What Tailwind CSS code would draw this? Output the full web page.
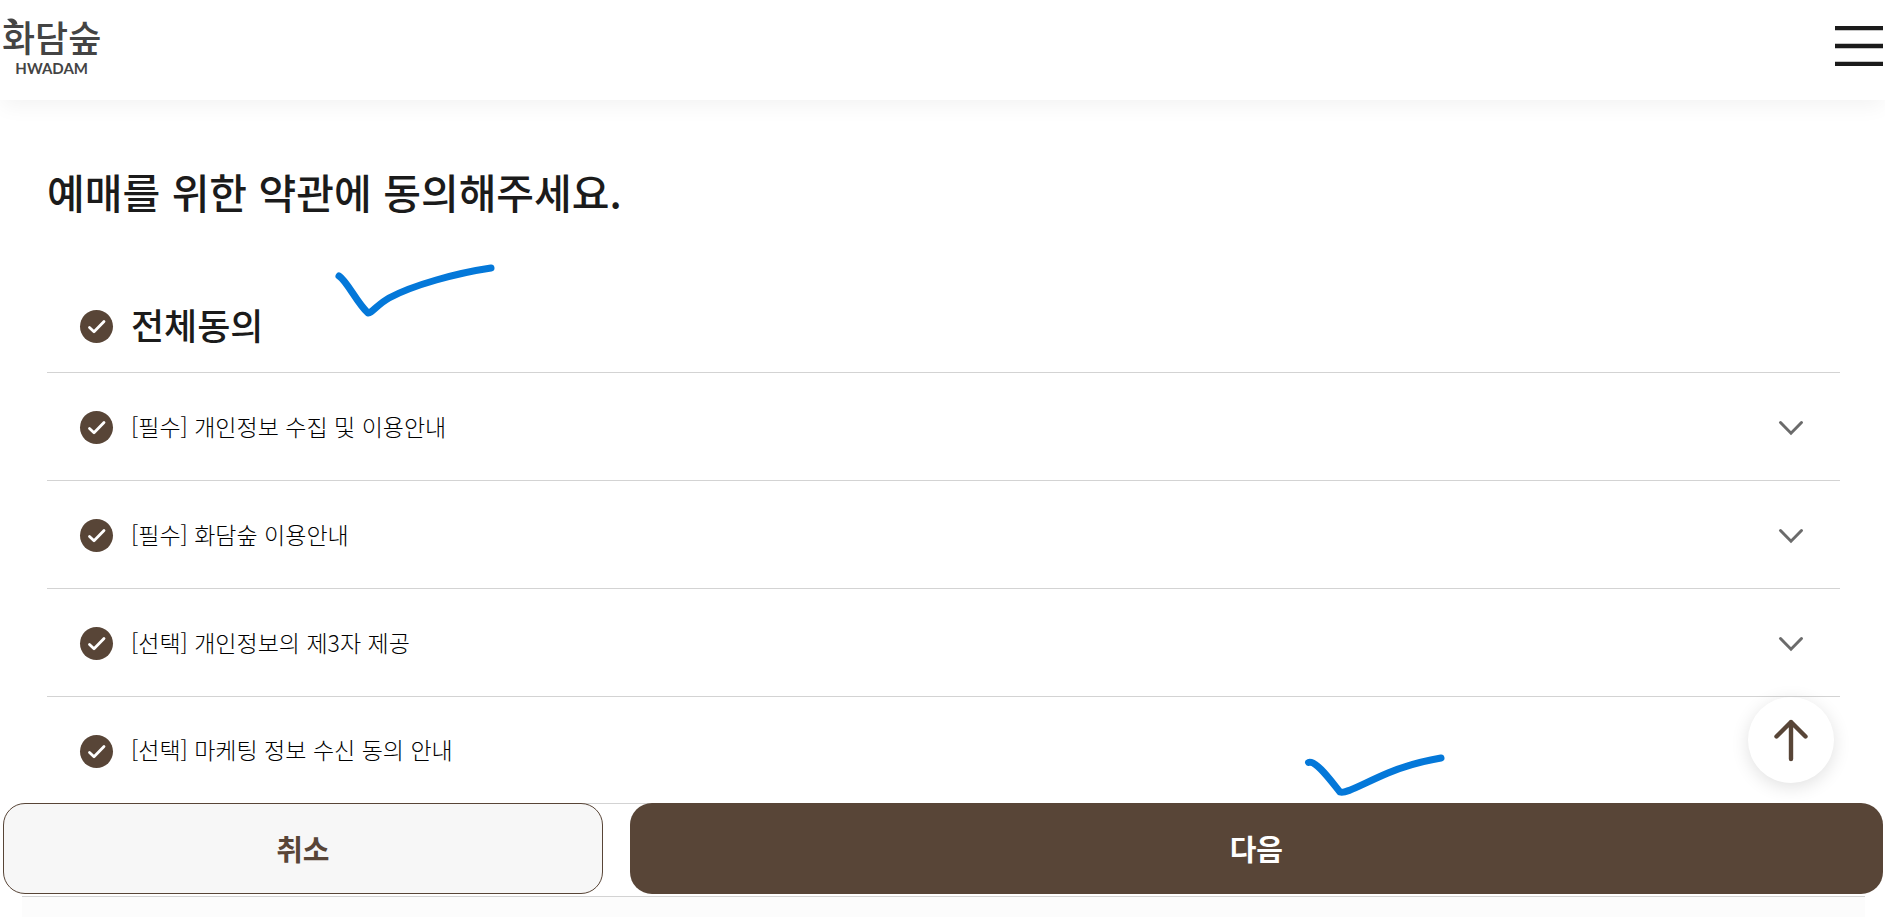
<!DOCTYPE html>
<html lang="ko">
<head>
    <meta charset="UTF-8">
    <meta name="viewport" content="width=device-width, initial-scale=1.0">
    <title>화담숲 예매</title>
    <script src="https://cdn.jsdelivr.net/npm/@tailwindcss/browser@4"></script>
</head>
<body class="relative flex min-h-screen flex-col bg-white font-['Noto_Sans_CJK_KR',sans-serif] text-[#1b1b1b]">
<header class="flex h-[100px] items-start justify-between px-[2px] shadow-[0_8px_20px_-2px_rgba(0,0,0,0.05)]">
    <a href="#" class="relative flex flex-col items-center pt-[10px] text-[#444]">
        <span class="text-[36px] leading-[52px] font-medium">화담숲</span>
        <span class="font-[Lato,sans-serif] text-[15px] leading-[12px] font-bold">HWADAM</span>
        <!-- leaf -->
        <svg class="absolute top-[18px] left-[4px] h-[7px] w-[12px]" viewBox="0 0 12 7" fill="#444"><path d="M1 1C6-.5 11 1 11.500 6.500C6 6.500 4 4 1 1z"/></svg>
    </a>
    <button type="button" aria-label="메뉴" class="mt-[26px] h-[40px] w-[48px]">
        <svg class="block h-[40px] w-[48px]" viewBox="0 0 48 40" fill="#1b1b1b">
            <path d="M0 0h48v4.3H0zM0 17.7h48v4.6H0zM0 35.7h48V40H0z"/>
        </svg>
    </button>
</header>

<main class="pr-[45px] pl-[47px]">
    <h1 class="pt-[61px] text-[41px] leading-[60px] font-medium">예매를 위한 약관에 동의해주세요.</h1>

    <form id="agreeForm" class="mt-[59px]">
        <div class="flex h-[93px] items-center border-b border-[#d3d3d3] pl-[33px]">
            <label class="flex items-center gap-[18px]">
                <span class="grid size-[33px]">
                    <input type="checkbox" id="agreeAll" checked class="col-start-1 row-start-1 appearance-none rounded-full bg-[#bbb] checked:bg-[#584537]">
                    <svg class="pointer-events-none col-start-1 row-start-1" viewBox="0 0 33 33" fill="none" stroke="#fff" stroke-width="2.8" stroke-linecap="round" stroke-linejoin="round"><path d="M9.5 17.5l4.5 4.2L24 11.5"/></svg>
                </span>
                <span class="pb-1 text-[36px] leading-[52px] font-medium">전체동의</span>
            </label>
        </div>

        <div class="flex h-[108px] items-center justify-between border-b border-[#d3d3d3] pt-[2px] pr-[36px] pl-[33px]">
            <label class="flex items-center gap-[18px]">
                <span class="grid size-[33px]">
                    <input type="checkbox" checked class="agree col-start-1 row-start-1 appearance-none rounded-full bg-[#bbb] checked:bg-[#584537]">
                    <svg class="pointer-events-none col-start-1 row-start-1" viewBox="0 0 33 33" fill="none" stroke="#fff" stroke-width="2.8" stroke-linecap="round" stroke-linejoin="round"><path d="M9.5 17.5l4.5 4.2L24 11.5"/></svg>
                </span>
                <span class="pb-1 text-[23px] leading-[36px] font-light text-black">[필수] 개인정보 수집 및 이용안내</span>
            </label>
            <button type="button" aria-label="내용 보기">
                <svg class="block h-[16px] w-[26px]" viewBox="0 0 26 16" fill="none" stroke="#6b6b6b" stroke-width="3" stroke-linecap="round"><path d="M2.5 2.5L13 13.2 23.500 2.5"/></svg>
            </button>
        </div>

        <div class="flex h-[108px] items-center justify-between border-b border-[#d3d3d3] pt-[2px] pr-[36px] pl-[33px]">
            <label class="flex items-center gap-[18px]">
                <span class="grid size-[33px]">
                    <input type="checkbox" checked class="agree col-start-1 row-start-1 appearance-none rounded-full bg-[#bbb] checked:bg-[#584537]">
                    <svg class="pointer-events-none col-start-1 row-start-1" viewBox="0 0 33 33" fill="none" stroke="#fff" stroke-width="2.8" stroke-linecap="round" stroke-linejoin="round"><path d="M9.5 17.5l4.5 4.2L24 11.5"/></svg>
                </span>
                <span class="pb-1 text-[23px] leading-[36px] font-light text-black">[필수] 화담숲 이용안내</span>
            </label>
            <button type="button" aria-label="내용 보기">
                <svg class="block h-[16px] w-[26px]" viewBox="0 0 26 16" fill="none" stroke="#6b6b6b" stroke-width="3" stroke-linecap="round"><path d="M2.5 2.5L13 13.2 23.500 2.5"/></svg>
            </button>
        </div>

        <div class="flex h-[108px] items-center justify-between border-b border-[#d3d3d3] pt-[2px] pr-[36px] pl-[33px]">
            <label class="flex items-center gap-[18px]">
                <span class="grid size-[33px]">
                    <input type="checkbox" checked class="agree col-start-1 row-start-1 appearance-none rounded-full bg-[#bbb] checked:bg-[#584537]">
                    <svg class="pointer-events-none col-start-1 row-start-1" viewBox="0 0 33 33" fill="none" stroke="#fff" stroke-width="2.8" stroke-linecap="round" stroke-linejoin="round"><path d="M9.5 17.5l4.5 4.2L24 11.5"/></svg>
                </span>
                <span class="pb-1 text-[23px] leading-[36px] font-light text-black">[선택] 개인정보의 제3자 제공</span>
            </label>
            <button type="button" aria-label="내용 보기">
                <svg class="block h-[16px] w-[26px]" viewBox="0 0 26 16" fill="none" stroke="#6b6b6b" stroke-width="3" stroke-linecap="round"><path d="M2.5 2.5L13 13.2 23.500 2.5"/></svg>
            </button>
        </div>

        <div class="flex h-[107px] items-center border-b border-[#d3d3d3] pt-[2px] pl-[33px]">
            <label class="flex items-center gap-[18px]">
                <span class="grid size-[33px]">
                    <input type="checkbox" checked class="agree col-start-1 row-start-1 appearance-none rounded-full bg-[#bbb] checked:bg-[#584537]">
                    <svg class="pointer-events-none col-start-1 row-start-1" viewBox="0 0 33 33" fill="none" stroke="#fff" stroke-width="2.8" stroke-linecap="round" stroke-linejoin="round"><path d="M9.5 17.5l4.5 4.2L24 11.5"/></svg>
                </span>
                <span class="pb-1 text-[23px] leading-[36px] font-light text-black">[선택] 마케팅 정보 수신 동의 안내</span>
            </label>
        </div>
    </form>
</main>

<!-- bottom buttons -->
<div class="-mt-px flex gap-[27px] pr-[2px] pl-[3px]">
    <button type="button" class="h-[91px] w-[31.9%] rounded-[22px] border border-[#584537] bg-[#f7f7f7] text-[29px] font-bold text-[#584537]">취소</button>
    <button type="submit" form="agreeForm" class="h-[91px] flex-1 rounded-[22px] bg-[#584537] text-[29px] font-bold text-white">다음</button>
</div>
<footer class="mt-[2px] mr-[20px] ml-[22px] flex-1 border-t border-[#d3d3d3] bg-[#fcfcfc]"></footer>

<!-- scroll to top -->
<button type="button" id="toTop" aria-label="맨 위로" class="absolute right-[51px] bottom-[134px] grid size-[86px] place-items-center rounded-full bg-white shadow-[0_4px_18px_rgba(0,0,0,0.12)]">
    <svg class="h-[44px] w-[36px]" viewBox="0 0 36 44" fill="none" stroke="#584537" stroke-width="4.4" stroke-linecap="round" stroke-linejoin="round"><path d="M18 41V4M3.500 18.500L18 4l14.500 14.500"/></svg>
</button>

<!-- pen marks -->
<svg class="pointer-events-none absolute top-[260px] left-[330px] h-[62px] w-[170px]" viewBox="330 260 170 62" fill="none" stroke="#0478d9" stroke-width="7" stroke-linecap="round" stroke-linejoin="round">
    <path d="M339 276C347 281 357 303 368 313C371 314 378 304 389 298C413 285 457 273 491 268"/>
</svg>
<svg class="pointer-events-none absolute top-[748px] left-[69%] h-[52px] w-[150px]" viewBox="1301 747 150 52" fill="none" stroke="#0478d9" stroke-width="7" stroke-linecap="round" stroke-linejoin="round">
    <path d="M1308.500 761.500C1316 759 1331 780 1340 791C1346 793 1362 783 1388 772C1407 764 1424 760 1441 757"/>
</svg>

<script>
    const all = document.getElementById('agreeAll');
    const items = document.querySelectorAll('.agree');

    all.addEventListener('change', () => {
        items.forEach((item) => { item.checked = all.checked; });
    });
    items.forEach((item) => {
        item.addEventListener('change', () => {
            all.checked = [...items].every((i) => i.checked);
        });
    });
    document.getElementById('toTop').addEventListener('click', () => {
        window.scrollTo({ top: 0, behavior: 'smooth' });
    });
</script>
</body>
</html>
